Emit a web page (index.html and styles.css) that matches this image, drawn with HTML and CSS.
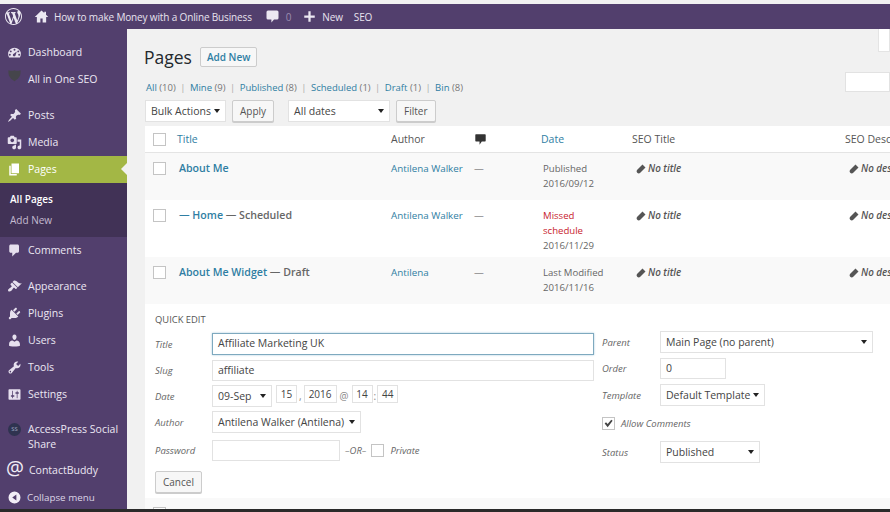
FILE: index.html
```html
<!DOCTYPE html>
<html lang="en">

<head>
    <meta charset="UTF-8">
    <title>Pages</title>
    <link rel="stylesheet" href="styles.css">
</head>

<body>
    <!-- Admin bar -->
    <header class="adminbar">
        <svg class="bar-logo" viewBox="0 0 20 20"><path d="M20 10c0-5.510-4.490-10-10-10C4.480 0 0 4.490 0 10c0 5.520 4.480 10 10 10 5.510 0 10-4.480 10-10zM7.780 15.370L4.370 6.220c.550-.020 1.170-.080 1.170-.080.500-.060.440-1.130-.060-1.110 0 0-1.450.110-2.370.110-.180 0-.370 0-.580-.010C4.120 2.690 6.870 1.110 10 1.110c2.330 0 4.450.870 6.050 2.340-.680-.110-1.650.390-1.650 1.580 0 .740.450 1.360.900 2.100.350.610.550 1.360.550 2.460 0 1.490-1.400 5-1.400 5l-3.030-8.370c.540-.020.820-.170.820-.170.500-.050.440-1.250-.060-1.220 0 0-1.440.120-2.380.120-.870 0-2.330-.120-2.330-.120-.500-.030-.560 1.200-.060 1.220l.920.080 1.260 3.410zM17.410 10c.240-.640.740-1.870.430-4.250.700 1.290 1.050 2.710 1.050 4.250 0 3.290-1.730 6.240-4.400 7.780.970-2.590 1.940-5.200 2.920-7.780zM6.100 18.090C3.120 16.650 1.110 13.530 1.110 10c0-1.300.230-2.480.720-3.590C3.250 10.300 4.670 14.200 6.100 18.090zm4.030-6.630l2.580 6.980c-.860.290-1.760.450-2.710.450-.790 0-1.570-.110-2.290-.330.810-2.380 1.630-4.740 2.420-7.100z"/></svg>
        <svg class="bar-icon" viewBox="0 0 20 20"><path d="M10 2L1 10.500h2.800V18h4.700v-5.500h3V18h4.700v-7.500H19l-3-2.900V3.500h-2.300v1.900z"/></svg>
        <span class="bar-text site-name">How to make Money with a Online Business</span>
        <svg class="bar-icon comment-icon" viewBox="0 0 20 20"><path d="M4 2h12a2 2 0 0 1 2 2v8a2 2 0 0 1-2 2h-4l-3.500 4v-4H4a2 2 0 0 1-2-2V4a2 2 0 0 1 2-2z"/></svg>
        <span class="bar-text bar-count">0</span>
        <svg class="bar-icon plus-icon" viewBox="0 0 20 20"><path d="M8.500 3h3v5.500H17v3h-5.500V17h-3v-5.500H3v-3h5.500z"/></svg>
        <span class="bar-text">New</span>
        <span class="bar-text bar-seo">SEO</span>
    </header>

    <div class="wrap">
        <!-- Sidebar menu -->
        <nav class="sidebar">
            <a class="menu-item">
                <svg class="menu-icon" viewBox="0 0 20 20"><path fill-rule="evenodd" d="M10 3.500a8.500 8.500 0 0 1 8.500 8.500c0 1.700-.5 3.200-1.300 4.500H2.800A8.400 8.400 0 0 1 1.500 12A8.500 8.500 0 0 1 10 3.500zM10 5a1.300 1.300 0 1 0 0 2.600a1.300 1.300 0 0 0 0-2.600zM5 7.200a1.300 1.300 0 1 0 0 2.600a1.300 1.300 0 0 0 0-2.600zM15 7.200a1.300 1.300 0 1 0 0 2.600a1.300 1.300 0 0 0 0-2.600zM13 8.500l-4 3.200a1.800 1.800 0 1 0 2.300 2.300zM3.800 11.800a1.300 1.300 0 1 0 0 2.600a1.300 1.300 0 0 0 0-2.600zM16.200 11.800a1.300 1.300 0 1 0 0 2.600a1.300 1.300 0 0 0 0-2.600z"/></svg>
                <span>Dashboard</span>
            </a>
            <a class="menu-item menu-gap-after">
                <svg class="menu-icon seo-shield" viewBox="0 0 20 20"><path d="M2 3c3 1 5.500 1 8 0c2.500 1 5 1 8 0c.6 6.500-1.500 11-8 14.500C3.500 14 1.400 9.500 2 3z"/></svg>
                <span>All in One SEO</span>
            </a>
            <a class="menu-item">
                <svg class="menu-icon" viewBox="0 0 20 20"><path d="M10.440 3.020l1.820-1.820 6.360 6.350-1.830 1.820c-1.050-.680-2.480-.570-3.410.360l-.750.750c-.920.930-1.040 2.350-.350 3.410l-1.830 1.820-2.410-2.410-2.800 2.790c-.420.420-3.380 2.710-3.800 2.290s1.860-3.390 2.280-3.810l2.790-2.790L4.100 9.360l1.830-1.820c1.050.690 2.480.570 3.400-.360l.750-.750c.930-.920 1.050-2.350.360-3.410z"/></svg>
                <span>Posts</span>
            </a>
            <a class="menu-item">
                <svg class="menu-icon" viewBox="0 0 20 20"><path d="M13 11V4c0-.550-.450-1-1-1h-1.670L9 1H5L3.670 3H2c-.550 0-1 .450-1 1v7c0 .550.450 1 1 1h10c.550 0 1-.450 1-1zM7 4.500c1.380 0 2.500 1.120 2.500 2.500S8.380 9.500 7 9.500 4.500 8.380 4.500 7 5.620 4.500 7 4.500zM14 6h5v10.500c0 1.380-1.120 2.500-2.500 2.500S14 17.880 14 16.500s1.120-2.500 2.500-2.500c.170 0 .340.020.500.050V9h-3V6zm-4 8.050V13h2v3.500c0 1.380-1.120 2.500-2.500 2.500S7 17.880 7 16.500 8.120 14 9.500 14c.170 0 .340.020.500.050z"/></svg>
                <span>Media</span>
            </a>
            <a class="menu-item menu-current">
                <svg class="menu-icon" viewBox="0 0 20 20"><path d="M6 15V2h10v13H6zm-1 1h8v2H3V5h2v11z"/></svg>
                <span>Pages</span>
            </a>
            <div class="submenu">
                <a class="submenu-item submenu-current">All Pages</a>
                <a class="submenu-item">Add New</a>
            </div>
            <a class="menu-item menu-gap-after">
                <svg class="menu-icon" viewBox="0 0 20 20"><path d="M5 2h9c1.100 0 2 .900 2 2v7c0 1.100-.900 2-2 2h-2l-5 5v-5H5c-1.100 0-2-.900-2-2V4c0-1.100.900-2 2-2z"/></svg>
                <span>Comments</span>
            </a>
            <a class="menu-item">
                <svg class="menu-icon" viewBox="0 0 20 20"><path d="M14.480 11.060L7.410 3.990l1.500-1.500c.500-.560 2.300-.470 3.510.320 1.210.800 1.430 1.280 2.910 2.100 1.180.640 2.450 1.260 4.450.850zm-.710.710L6.700 4.700 4.930 6.470c-.390.390-.390 1.020 0 1.410l1.060 1.060c.390.390.390 1.030 0 1.420-.600.600-1.430 1.110-2.210 1.690-.350.260-.700.530-1.010.840C1.430 13.230.910 15.240 1.820 16.170c.920.920 2.940.400 4.280-.940.300-.310.570-.660.830-1.020.580-.770 1.090-1.600 1.690-2.210.390-.390 1.020-.390 1.410 0l1.060 1.060c.390.390 1.020.390 1.410 0z"/></svg>
                <span>Appearance</span>
            </a>
            <a class="menu-item">
                <svg class="menu-icon" viewBox="0 0 20 20"><path d="M13.110 4.360L9.870 7.600 8 5.730l3.240-3.240c.350-.340 1.050-.200 1.560.320.520.510.660 1.210.310 1.550zm-8 1.770l.910-1.120 9.010 9.010-1.190.840c-.710.710-2.630 1.160-3.820 1.160H6.140L4.900 17.260c-.590.590-1.540.590-2.120 0-.590-.580-.590-1.530 0-2.120l1.240-1.240v-3.880c0-1.130.400-3.190 1.090-3.890zm7.260 3.970l3.240-3.240c.340-.350 1.040-.210 1.550.310.520.510.660 1.210.310 1.550l-3.240 3.250z"/></svg>
                <span>Plugins</span>
            </a>
            <a class="menu-item">
                <svg class="menu-icon" viewBox="0 0 20 20"><path d="M10 9.250c-2.270 0-2.730-3.440-2.730-3.440C7 4.020 7.820 2 9.970 2c2.160 0 2.980 2.020 2.710 3.810 0 0-.410 3.440-2.680 3.440zm0 2.570L12.720 10c2.390 0 4.520 2.330 4.520 4.530v2.490s-3.650 1.130-7.240 1.130c-3.650 0-7.240-1.130-7.240-1.130v-2.490c0-2.250 1.940-4.480 4.470-4.480z"/></svg>
                <span>Users</span>
            </a>
            <a class="menu-item">
                <svg class="menu-icon" viewBox="0 0 20 20"><path d="M16.680 9.770c-1.340 1.340-3.300 1.670-4.950.990l-5.410 6.520c-.990.990-2.590.990-3.580 0s-.990-2.590 0-3.570l6.520-5.420c-.680-1.650-.350-3.610.990-4.950 1.280-1.280 3.120-1.620 4.720-1.060l-2.890 2.890 2.820 2.820 2.860-2.870c.530 1.580.180 3.390-1.080 4.650zM3.810 16.210c.400.390 1.040.390 1.430 0 .400-.400.400-1.040 0-1.430-.390-.400-1.030-.400-1.430 0-.390.390-.390 1.030 0 1.430z"/></svg>
                <span>Tools</span>
            </a>
            <a class="menu-item menu-gap-small">
                <svg class="menu-icon" viewBox="0 0 20 20"><path d="M18 16V4c0-.550-.450-1-1-1H3c-.550 0-1 .450-1 1v12c0 .550.450 1 1 1h14c.550 0 1-.450 1-1zM8 11h1c.550 0 1 .450 1 1s-.450 1-1 1H8v1.500c0 .280-.220.500-.500.500s-.500-.220-.500-.500V13H6c-.550 0-1-.450-1-1s.450-1 1-1h1V5.500c0-.280.220-.500.500-.500s.500.220.500.500V11zm5-2h-1c-.550 0-1-.450-1-1s.450-1 1-1h1V5.500c0-.280.220-.500.500-.500s.500.220.500.500V7h1c.550 0 1 .450 1 1s-.450 1-1 1h-1v5.500c0 .280-.220.500-.500.500s-.500-.220-.500-.500V9z"/></svg>
                <span>Settings</span>
            </a>
            <a class="menu-item menu-tall">
                <span class="ss-badge">SS</span>
                <span>AccessPress Social Share</span>
            </a>
            <a class="menu-item">
                <span class="at-icon">@</span>
                <span>ContactBuddy</span>
            </a>
            <a class="menu-item collapse-item">
                <svg class="menu-icon" viewBox="0 0 20 20"><path fill-rule="evenodd" d="M10 2a8 8 0 1 1 0 16a8 8 0 0 1 0-16zM12.500 6L7 10l5.500 4z"/></svg>
                <span>Collapse menu</span>
            </a>
        </nav>

        <!-- Main content -->
        <main class="content">
            <div class="heading-row">
                <h1>Pages</h1>
                <a class="btn add-new">Add New</a>
                <div class="screen-tab"></div>
            </div>

            <div class="views-row">
                <p class="views">
                    <a>All</a> (10) <i>|</i> <a>Mine</a> (9) <i>|</i> <a>Published</a> (8) <i>|</i> <a>Scheduled</a> (1) <i>|</i> <a>Draft</a> (1) <i>|</i> <a>Bin</a> (8)
                </p>
                <div class="search-box"></div>
            </div>

            <div class="filters">
                <div class="select bulk">Bulk Actions</div>
                <a class="btn">Apply</a>
                <div class="select dates">All dates</div>
                <a class="btn">Filter</a>
            </div>

            <div class="table">
                <div class="row head">
                    <span class="check"></span>
                    <a>Title</a>
                    <span>Author</span>
                    <svg class="head-comment" viewBox="0 0 20 20"><path d="M3 2h14a1 1 0 0 1 1 1v9a1 1 0 0 1-1 1h-5l-3.500 5v-5H3a1 1 0 0 1-1-1V3a1 1 0 0 1 1-1z"/></svg>
                    <a>Date</a>
                    <span>SEO Title</span>
                    <span>SEO Description</span>
                </div>

                <div class="row alt row-short">
                    <span class="check"></span>
                    <div class="post-title"><a>About Me</a></div>
                    <a>Antilena Walker</a>
                    <span>—</span>
                    <div class="date">Published<br>2016/09/12</div>
                    <div class="seo"><svg class="pencil" viewBox="0 0 20 20"><path d="M13 1l6 6l-10.500 10.500c-1.700 1.700-4.300 1.700-6 0s-1.700-4.300 0-6z"/></svg>No title</div>
                    <div class="seo"><svg class="pencil" viewBox="0 0 20 20"><path d="M13 1l6 6l-10.500 10.500c-1.700 1.700-4.300 1.700-6 0s-1.700-4.300 0-6z"/></svg>No description</div>
                </div>

                <div class="row row-tall">
                    <span class="check"></span>
                    <div class="post-title"><a>— Home</a> — Scheduled</div>
                    <a>Antilena Walker</a>
                    <span>—</span>
                    <div class="date"><span class="missed">Missed<br>schedule</span><br>2016/11/29</div>
                    <div class="seo"><svg class="pencil" viewBox="0 0 20 20"><path d="M13 1l6 6l-10.500 10.500c-1.700 1.700-4.300 1.700-6 0s-1.700-4.300 0-6z"/></svg>No title</div>
                    <div class="seo"><svg class="pencil" viewBox="0 0 20 20"><path d="M13 1l6 6l-10.500 10.500c-1.700 1.700-4.300 1.700-6 0s-1.700-4.300 0-6z"/></svg>No description</div>
                </div>

                <div class="row alt row-short">
                    <span class="check"></span>
                    <div class="post-title"><a>About Me Widget</a> — Draft</div>
                    <a>Antilena</a>
                    <span>—</span>
                    <div class="date">Last Modified<br>2016/11/16</div>
                    <div class="seo"><svg class="pencil" viewBox="0 0 20 20"><path d="M13 1l6 6l-10.500 10.500c-1.700 1.700-4.300 1.700-6 0s-1.700-4.300 0-6z"/></svg>No title</div>
                    <div class="seo"><svg class="pencil" viewBox="0 0 20 20"><path d="M13 1l6 6l-10.500 10.500c-1.700 1.700-4.300 1.700-6 0s-1.700-4.300 0-6z"/></svg>No description</div>
                </div>

                <!-- Quick edit -->
                <section class="quick-edit">
                    <h4>QUICK EDIT</h4>
                    <div class="qe-columns">
                        <div class="qe-left">
                            <div class="field"><em>Title</em><div class="input wide focused">Affiliate Marketing UK</div></div>
                            <div class="field"><em>Slug</em><div class="input wide">affiliate</div></div>
                            <div class="field">
                                <em>Date</em>
                                <div class="select month">09-Sep</div>
                                <div class="input small day">15</div><b>,</b>
                                <div class="input small year">2016</div><b class="at">@</b>
                                <div class="input small day">14</div><b class="colon">:</b>
                                <div class="input small day">44</div>
                            </div>
                            <div class="field"><em>Author</em><div class="select author">Antilena Walker (Antilena)</div></div>
                            <div class="field password-row">
                                <em>Password</em>
                                <div class="input password"></div>
                                <em class="or">–OR–</em>
                                <span class="check private"></span>
                                <em class="private-label">Private</em>
                            </div>
                            <a class="btn cancel">Cancel</a>
                        </div>
                        <div class="qe-right">
                            <div class="field"><em>Parent</em><div class="select parent">Main Page (no parent)</div></div>
                            <div class="field order-row"><em>Order</em><div class="input order">0</div></div>
                            <div class="field"><em>Template</em><div class="select template">Default Template</div></div>
                            <div class="field allow">
                                <span class="check checked"><svg viewBox="0 0 20 20"><path d="M3 10l2.500-2.500L8.500 11L15 3l2.500 2L8.500 17z"/></svg></span>
                                <em>Allow Comments</em>
                            </div>
                            <div class="field"><em>Status</em><div class="select status">Published</div></div>
                        </div>
                    </div>
                </section>

                <div class="row alt row-short">
                    <span class="check"></span>
                    <div class="post-title"><a>Contact Me</a></div>
                    <a>Antilena Walker</a>
                    <span>—</span>
                    <div class="date">Published<br>2016/09/12</div>
                    <div class="seo"><svg class="pencil" viewBox="0 0 20 20"><path d="M13 1l6 6l-10.500 10.500c-1.700 1.700-4.300 1.700-6 0s-1.700-4.300 0-6z"/></svg>No title</div>
                    <div class="seo"><svg class="pencil" viewBox="0 0 20 20"><path d="M13 1l6 6l-10.500 10.500c-1.700 1.700-4.300 1.700-6 0s-1.700-4.300 0-6z"/></svg>No description</div>
                </div>
            </div>
        </main>
    </div>

    <div class="bottom-edge"></div>
</body>

</html>
```

FILE: styles.css
```css
/* Colours of the admin theme */
:root {
    --purple: #523f6d;
    --purple-dark: #413256;
    --green: #a3b745;
    --link: #2f7ea3;
    --text: #555;
    --line: #ddd;
}

html, body {
    height: 100%;
}

body {
    display: flex;
    flex-direction: column;
    height: 512px;
    margin: 0;
    overflow: hidden;
    background-color: #f1f1f1;
    color: var(--text);
    font-family: "Open Sans", sans-serif;
    font-size: 10px;
}

a {
    color: var(--link);
}

/* Admin bar */
.adminbar {
    display: flex;
    flex: none;
    align-items: center;
    height: 25px;
    margin-top: 4px;
    padding-left: 5px;
    background-color: var(--purple);
    color: #e8e3ef;
    fill: #ece8f2;
}

.bar-logo {
    width: 17px;
    height: 17px;
    margin-right: 12px;
}

.bar-icon {
    flex: none;
    width: 15px;
    height: 15px;
}

.bar-text {
    font-size: 10px;
    letter-spacing: -.15px;
}

.site-name {
    margin-left: 5px;
}

.comment-icon {
    margin-left: 13px;
}

.bar-count {
    margin-left: 6px;
    color: #9b8db0;
}

.plus-icon {
    margin: 0 5px 0 11px;
}

.bar-seo {
    margin-left: 11px;
}

/* Sidebar */
.wrap {
    display: flex;
    flex: 1;
    min-height: 0;
}

.sidebar {
    flex: none;
    box-sizing: border-box;
    width: 127px;
    padding-top: 10px;
    background-color: var(--purple);
    color: #ece7f3;
    fill: #e6e0ee;
}

.menu-item {
    display: flex;
    position: relative;
    align-items: center;
    box-sizing: border-box;
    height: 27px;
    padding: 0 0 1px 7px;
    color: #ece7f3;
    font-size: 10.5px;
    line-height: 15px;
}

.menu-icon {
    flex: none;
    width: 15px;
    height: 15px;
    margin-right: 6px;
}

.menu-gap-after {
    margin-bottom: 9px;
}

.menu-gap-small {
    margin-bottom: 6px;
}

.seo-shield {
    margin-top: -7px;
    fill: #45454b;
}

.menu-current {
    background-color: var(--green);
    color: #fff;
    fill: #fff;
}

/* Little notch that points at the content */
.menu-current::after {
    content: "";
    position: absolute;
    right: 0;
    top: 7px;
    border: 6px solid transparent;
    border-right-color: #f1f1f1;
    border-left-width: 0;
}

.submenu {
    height: 54px;
    padding-top: 9px;
    box-sizing: border-box;
    background-color: var(--purple-dark);
}

.submenu-item {
    display: block;
    height: 21px;
    padding-left: 10px;
    color: #c4bbd1;
    font-size: 10px;
    line-height: 15px;
}

.submenu-current {
    color: #fff;
    font-weight: 600;
}

.menu-tall {
    height: 43px;
    align-items: flex-start;
    padding-top: 8px;
}

.ss-badge {
    flex: none;
    width: 13px;
    height: 13px;
    margin: 1px 7px 0 1px;
    border-radius: 50%;
    background-color: #2f3350;
    color: #9fa6c2;
    font-size: 6px;
    line-height: 13px;
    text-align: center;
}

.at-icon {
    flex: none;
    width: 17px;
    margin: -4px 6px 0 -1px;
    color: #f1edf6;
    font-size: 20px;
    line-height: 20px;
}

.collapse-item {
    color: #dcd5e6;
    font-size: 9.8px;
}

.collapse-item .menu-icon {
    margin-right: 5px;
    fill: #f1edf6;
}

/* Content */
.content {
    flex: 1;
    min-width: 0;
    padding-left: 18px;
    overflow: hidden;
}

.heading-row {
    display: flex;
    align-items: flex-start;
    height: 43px;
}

h1 {
    margin: 15px 8px 0 -1px;
    color: #23282d;
    font-size: 17.5px;
    font-weight: 400;
    line-height: 26px;
}

.btn {
    display: inline-block;
    box-sizing: border-box;
    height: 22px;
    padding: 0 7px;
    border: 1px solid #ccc;
    border-radius: 2px;
    background-color: #f7f7f7;
    box-shadow: 0 1px 0 #ccc;
    color: var(--text);
    font-size: 10px;
    line-height: 20px;
}

.add-new {
    height: 20px;
    margin-top: 18px;
    padding: 0 6px;
    box-shadow: none;
    color: var(--link);
    font-weight: 600;
    line-height: 18px;
}

.screen-tab {
    box-sizing: border-box;
    width: 12px;
    height: 23px;
    margin-left: auto;
    border: 1px solid #e4e4e4;
    border-top: 0;
    background-color: #fff;
}

.views-row {
    display: flex;
    align-items: flex-start;
    height: 28px;
}

.views {
    margin: 8px 0 0 1px;
    color: #777;
    font-size: 9.5px;
    line-height: 15px;
}

.views i {
    margin: 0 2px;
    color: #aaa;
    font-style: normal;
}

.search-box {
    box-sizing: border-box;
    width: 45px;
    height: 20px;
    margin-left: auto;
    border: 1px solid #e2e2e2;
    background-color: #fff;
}

.filters {
    display: flex;
    align-items: center;
    gap: 6px;
    height: 22px;
    margin-bottom: 4px;
}

/* Native looking select with a small arrow */
.select {
    position: relative;
    box-sizing: border-box;
    height: 22px;
    padding-left: 5px;
    border: 1px solid #e2e2e2;
    background-color: #fff;
    color: #444;
    font-size: 10.5px;
    line-height: 20px;
}

.select::after {
    content: "";
    position: absolute;
    right: 5px;
    top: 8px;
    border: 3px solid transparent;
    border-top: 4px solid #222;
    border-bottom-width: 0;
}

.bulk {
    width: 81px;
}

.dates {
    width: 102px;
    margin-left: 8px;
}

.filters .btn {
    height: 22px;
}

/* Post table */
.table {
    width: 760px;
    background-color: #fff;
    font-size: 9.8px;
}

.row {
    display: grid;
    grid-template-columns: 24px 214px 83px 67px 91px 213px 60px;
    align-items: start;
    box-sizing: border-box;
    padding-left: 8px;
    line-height: 15px;
    white-space: nowrap;
}

.head {
    align-items: center;
    height: 27px;
    border-bottom: 1px solid #e4e4e4;
    font-size: 10.5px;
}

.head-comment {
    width: 13px;
    height: 13px;
    fill: #333;
}

.alt {
    background-color: #f9f9f9;
}

.row-short {
    height: 47px;
    padding-top: 8px;
}

.row-tall {
    height: 57px;
    padding-top: 8px;
}

.check {
    display: block;
    box-sizing: border-box;
    width: 13px;
    height: 13px;
    border: 1px solid #c4c4c4;
    background-color: #fff;
}

.row-short > .check, .row-tall > .check {
    margin-top: 1px;
}

.post-title {
    margin-left: 2px;
    color: #666;
    font-size: 10.6px;
    font-weight: 600;
}

.post-title a {
    color: var(--link);
}

.date {
    padding-left: 2px;
    color: #666;
    font-size: 9.6px;
}

.missed {
    color: #c8232f;
}

.seo {
    display: flex;
    align-items: center;
    gap: 2px;
    padding-left: 4px;
    color: #555;
    font-style: italic;
    font-weight: 600;
}

.pencil {
    flex: none;
    width: 10px;
    height: 10px;
    fill: #555;
}

/* Quick edit form */
.quick-edit {
    box-sizing: border-box;
    height: 194px;
    padding: 8px 0 0 10px;
    background-color: #fff;
}

h4 {
    margin: 0 0 6px;
    color: #555;
    font-size: 9.4px;
    font-weight: 400;
    line-height: 15px;
}

.qe-columns {
    display: flex;
}

.qe-left {
    flex: none;
    width: 447px;
}

.qe-right {
    margin-top: -2px;
}

.qe-right .field > em {
    width: 58px;
}

.field {
    display: flex;
    align-items: center;
    height: 22px;
    margin-bottom: 4px;
    color: #666;
}

.field em {
    flex: none;
    width: 57px;
    font-size: 9.5px;
}

.field b {
    margin: 0 2px;
    color: #888;
    font-size: 10px;
    font-weight: 400;
}

.field .at {
    margin: 0 3px;
}

.field .colon {
    margin: 0 1px;
}

.input {
    box-sizing: border-box;
    height: 21px;
    padding-left: 5px;
    border: 1px solid #e2e2e2;
    background-color: #fff;
    color: #444;
    font-size: 10.5px;
    line-height: 19px;
}

.wide {
    width: 382px;
}

.focused {
    height: 22px;
    border-color: #7ea9bf;
    box-shadow: 0 0 2px #a9cadb;
}

.month {
    width: 60px;
    margin-right: 4px;
    height: 22px;
}

.small {
    align-self: flex-start;
    height: 18px;
    padding: 0;
    font-size: 10px;
    line-height: 16px;
    text-align: center;
}

.day {
    width: 21px;
}

.year {
    width: 33px;
}

.author {
    width: 149px;
}

.password-row {
    margin-top: 6px;
}

.password {
    width: 128px;
}

.field .or {
    width: auto;
    margin: 0 5px;
}

.private {
    margin-right: 6px;
}

.cancel {
    height: 22px;
    margin-top: 6px;
}

.parent {
    width: 213px;
}

.order-row {
    margin-bottom: 5px;
}

.order {
    width: 66px;
}

.template {
    width: 105px;
}

.status {
    width: 100px;
}

.allow {
    margin: 5px 0 6px;
    height: 24px;
}

.qe-right .allow em {
    width: auto;
    margin-left: 6px;
}

.checked svg {
    display: block;
    fill: #444;
}

.bottom-edge {
    flex: none;
    height: 3px;
    background-color: #2a2a2a;
}
```
